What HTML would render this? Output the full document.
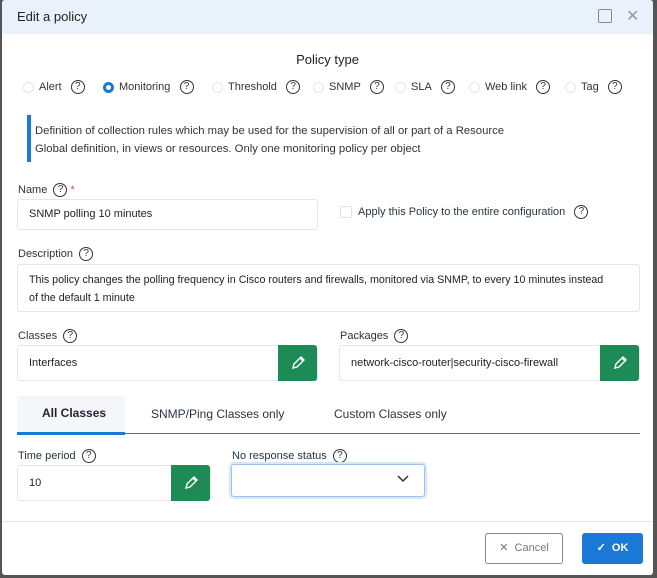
<!DOCTYPE html>
<html><head><meta charset="utf-8"><style>
*{box-sizing:border-box;margin:0;padding:0}
body{width:657px;height:578px;background:#555;font-family:"Liberation Sans",sans-serif;font-size:11px;color:#2b3440;position:relative;overflow:hidden}
.dlg{position:absolute;left:2px;top:0;width:651px;height:575px;background:#fff;border-radius:3px;overflow:hidden}
.a{position:absolute;white-space:nowrap}
.hdr{position:absolute;left:0;top:0;width:651px;height:34px;background:#e9f1fb}
.q{display:inline-block;width:14px;height:14px;border:1px solid #333;border-radius:50%;font-size:10px;line-height:12px;text-align:center;color:#333;vertical-align:middle}
.r{display:inline-block;width:11px;height:11px;border:1px solid #e4e6ea;border-radius:50%;vertical-align:middle;margin-right:5px}
.r.on{border:3px solid #1a78d6}
.inp{position:absolute;border:1px solid #e3e6ea;border-radius:3px;background:#fff;padding-left:11px;color:#222}
.gb{position:absolute;background:#1e8a55;border-radius:0 3px 3px 0}
.gb svg{position:absolute;left:13px;top:10px}
.rd{position:absolute;top:80px;color:#333;white-space:nowrap;font-size:11px}
</style></head><body>
<div class="dlg">
<div class="hdr"></div>
<div class="a" style="left:15px;top:9px;font-size:13px;color:#222">Edit a policy</div>
<div class="a" style="left:596px;top:9px;width:14px;height:14px;border:1px solid #888;border-radius:2px"></div>
<div class="a" style="left:624px;top:6px;font-size:16px;color:#999">✕</div>
<div class="a" style="left:0;width:651px;text-align:center;top:52px;font-size:13px;color:#222">Policy type</div>
<div class="rd" style="left:21px"><span class="r"></span>Alert&nbsp;&nbsp;&nbsp;<span class="q">?</span></div>
<div class="rd" style="left:101px"><span class="r on"></span>Monitoring&nbsp;&nbsp;&nbsp;<span class="q">?</span></div>
<div class="rd" style="left:210px"><span class="r"></span>Threshold&nbsp;&nbsp;&nbsp;<span class="q">?</span></div>
<div class="rd" style="left:311px"><span class="r"></span>SNMP&nbsp;&nbsp;&nbsp;<span class="q">?</span></div>
<div class="rd" style="left:393px"><span class="r"></span>SLA&nbsp;&nbsp;&nbsp;<span class="q">?</span></div>
<div class="rd" style="left:467px"><span class="r"></span>Web link&nbsp;&nbsp;&nbsp;<span class="q">?</span></div>
<div class="rd" style="left:563px"><span class="r"></span>Tag&nbsp;&nbsp;&nbsp;<span class="q">?</span></div>
<div class="a" style="left:25px;top:115px;width:4px;height:47px;background:#1a78d6"></div>
<div class="a" style="left:33px;top:122px;font-size:11.3px;line-height:18px;color:#333">Definition of collection rules which may be used for the supervision of all or part of a Resource<br>Global definition, in views or resources. Only one monitoring policy per object</div>
<div class="a" style="left:16px;top:183px">Name&nbsp;&nbsp;<span class="q">?</span> <span style="color:#e05050">*</span></div>
<div class="inp" style="left:15px;top:199px;width:301px;height:31px;line-height:29px">SNMP polling 10 minutes</div>
<div class="a" style="left:338px;top:206px;width:12px;height:12px;border:1px solid #e0e3e7;border-radius:2px"></div>
<div class="a" style="left:356px;top:205px">Apply this Policy to the entire configuration&nbsp;&nbsp;&nbsp;<span class="q">?</span></div>
<div class="a" style="left:16px;top:247px">Description&nbsp;&nbsp;<span class="q">?</span></div>
<div class="inp" style="left:15px;top:264px;width:623px;height:48px;padding-top:6px;line-height:18px;white-space:nowrap;font-size:10.7px">This policy changes the polling frequency in Cisco routers and firewalls, monitored via SNMP, to every 10 minutes instead<br>of the default 1 minute</div>
<div class="a" style="left:16px;top:329px">Classes&nbsp;&nbsp;<span class="q">?</span></div>
<div class="inp" style="left:15px;top:345px;width:301px;height:36px;line-height:34px">Interfaces</div>
<div class="gb" style="left:276px;top:345px;width:39px;height:36px"><svg width="14" height="15" viewBox="0 0 14 15"><path d="M2 13l1-4 7-7 3 3-7 7zM9 3l3 3" fill="none" stroke="#fff" stroke-width="1.4"/></svg></div>
<div class="a" style="left:338px;top:329px">Packages&nbsp;&nbsp;<span class="q">?</span></div>
<div class="inp" style="left:337px;top:345px;width:301px;height:36px;line-height:34px">network-cisco-router|security-cisco-firewall</div>
<div class="gb" style="left:598px;top:345px;width:39px;height:36px"><svg width="14" height="15" viewBox="0 0 14 15"><path d="M2 13l1-4 7-7 3 3-7 7zM9 3l3 3" fill="none" stroke="#fff" stroke-width="1.4"/></svg></div>
<div class="a" style="left:15px;top:396px;width:108px;height:37px;background:#f4f6f9"></div>
<div class="a" style="left:15px;top:432px;width:108px;height:3px;background:#1a78d6"></div>
<div class="a" style="left:15px;top:433px;width:623px;height:1px;background:#1a78d6"></div>
<div class="a" style="left:40px;top:406px;font-size:12px;font-weight:bold;color:#223">All Classes</div>
<div class="a" style="left:149px;top:407px;font-size:12px">SNMP/Ping Classes only</div>
<div class="a" style="left:332px;top:407px;font-size:12px">Custom Classes only</div>
<div class="a" style="left:16px;top:449px">Time period&nbsp;&nbsp;<span class="q">?</span></div>
<div class="inp" style="left:15px;top:465px;width:194px;height:36px;line-height:34px">10</div>
<div class="gb" style="left:169px;top:465px;width:39px;height:36px"><svg width="14" height="15" viewBox="0 0 14 15"><path d="M2 13l1-4 7-7 3 3-7 7zM9 3l3 3" fill="none" stroke="#fff" stroke-width="1.4"/></svg></div>
<div class="a" style="left:230px;top:449px">No response status&nbsp;&nbsp;<span class="q">?</span></div>
<div class="a" style="left:229px;top:464px;width:194px;height:33px;border:1px solid #9ec3ea;box-shadow:0 0 0 2px #d6e6f7;border-radius:3px"></div>
<svg class="a" style="left:395px;top:475px" width="12" height="8" viewBox="0 0 12 8"><path d="M1 1l5 5 5-5" fill="none" stroke="#333" stroke-width="1.5"/></svg>
<div class="a" style="left:0;top:521px;width:651px;height:1px;background:#e5e7ea"></div>
<div class="a" style="left:483px;top:533px;width:78px;height:31px;border:1px solid #888;border-radius:3px;color:#777;line-height:29px;text-align:center">✕&nbsp;&nbsp;Cancel</div>
<div class="a" style="left:580px;top:533px;width:61px;height:31px;background:#1a78d6;border-radius:3px;color:#fff;line-height:31px;text-align:center;font-weight:bold">✓&nbsp;&nbsp;OK</div>
</div>
</body></html>
